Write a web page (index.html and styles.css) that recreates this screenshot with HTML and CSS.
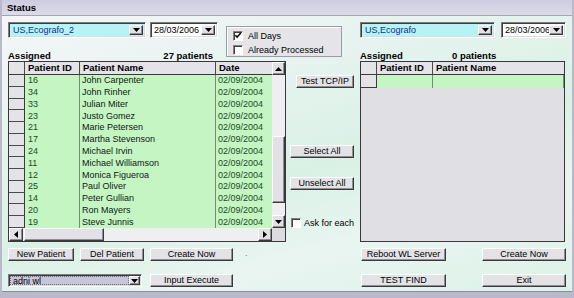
FILE: index.html
```html
<!DOCTYPE html>
<html>
<head>
<meta charset="utf-8">
<link rel="stylesheet" href="styles.css">
</head>
<body>
<div class="win">
  <div class="title">Status</div>
  <div class="body">
    <div class="top">
      <div class="tl">
        <div class="combos">
          <div class="combo cyan w138"><span class="val">US,Ecografo_2</span><span class="dd"><svg width="7" height="4" viewBox="0 0 7 4"><path d="M0 0h7L3.5 4z" fill="#000"/></svg></span></div>
          <div class="combo white w68"><span class="val">28/03/2006</span><span class="dd"><svg width="7" height="4" viewBox="0 0 7 4"><path d="M0 0h7L3.5 4z" fill="#000"/></svg></span></div>
        </div>
        <div class="lbl-row"><b>Assigned</b><b class="cnt-l">27 patients</b></div>
      </div>
      <div class="group">
        <div class="chk"><span class="box"><svg width="9" height="9" viewBox="0 0 9 9"><path d="M1.5 4.2L3.5 6.3L7.6 1.8" fill="none" stroke="#000" stroke-width="1.7"/></svg></span><span>All Days</span></div>
        <div class="chk"><span class="box"></span><span>Already Processed</span></div>
      </div>
      <div class="tr">
        <div class="combos gap6">
          <div class="combo cyan w135"><span class="val">US,Ecografo</span><span class="dd"><svg width="7" height="4" viewBox="0 0 7 4"><path d="M0 0h7L3.5 4z" fill="#000"/></svg></span></div>
          <div class="combo white w65"><span class="val">28/03/2006</span><span class="dd"><svg width="7" height="4" viewBox="0 0 7 4"><path d="M0 0h7L3.5 4z" fill="#000"/></svg></span></div>
        </div>
        <div class="lbl-row r"><b>Assigned</b><b>0 patients</b></div>
      </div>
    </div>

    <div class="main">
      <div class="dgrid left">
        <div class="hdr">
          <span class="sel"></span><span class="hc">Patient ID</span><span class="hc">Patient Name</span><span class="hc last">Date</span>
        </div>
        <div class="vscroll">
          <span class="sbtn"><svg width="7" height="4" viewBox="0 0 7 4"><path d="M0 4h7L3.5 0z" fill="#000"/></svg></span>
          <span class="track"><span class="vthumb"></span></span>
          <span class="sbtn"><svg width="7" height="4" viewBox="0 0 7 4"><path d="M0 0h7L3.5 4z" fill="#000"/></svg></span>
        </div>
        <div class="rows">
          <div class="row"><i></i><span class="id">16</span><span class="nm">John Carpenter</span><span class="dt">02/09/2004</span></div>
          <div class="row"><i></i><span class="id">34</span><span class="nm">John Rinher</span><span class="dt">02/09/2004</span></div>
          <div class="row"><i></i><span class="id">33</span><span class="nm">Julian Miter</span><span class="dt">02/09/2004</span></div>
          <div class="row"><i></i><span class="id">23</span><span class="nm">Justo Gomez</span><span class="dt">02/09/2004</span></div>
          <div class="row"><i></i><span class="id">21</span><span class="nm">Marie Petersen</span><span class="dt">02/09/2004</span></div>
          <div class="row"><i></i><span class="id">17</span><span class="nm">Martha Stevenson</span><span class="dt">02/09/2004</span></div>
          <div class="row"><i></i><span class="id">24</span><span class="nm">Michael Irvin</span><span class="dt">02/09/2004</span></div>
          <div class="row"><i></i><span class="id">11</span><span class="nm">Michael Williamson</span><span class="dt">02/09/2004</span></div>
          <div class="row"><i></i><span class="id">12</span><span class="nm">Monica Figueroa</span><span class="dt">02/09/2004</span></div>
          <div class="row"><i></i><span class="id">25</span><span class="nm">Paul Oliver</span><span class="dt">02/09/2004</span></div>
          <div class="row"><i></i><span class="id">14</span><span class="nm">Peter Gullian</span><span class="dt">02/09/2004</span></div>
          <div class="row"><i></i><span class="id">20</span><span class="nm">Ron Mayers</span><span class="dt">02/09/2004</span></div>
          <div class="row"><i></i><span class="id">19</span><span class="nm">Steve Junnis</span><span class="dt">02/09/2004</span></div>
        </div>
        <div class="hscroll">
          <span class="sbtn h"><svg width="4" height="7" viewBox="0 0 4 7"><path d="M4 0v7L0 3.5z" fill="#000"/></svg></span>
          <span class="htrack"><span class="hthumb"></span></span>
          <span class="sbtn h"><svg width="4" height="7" viewBox="0 0 4 7"><path d="M0 0v7L4 3.5z" fill="#000"/></svg></span>
        </div>
        <div class="corner"></div>
      </div>

      <div class="mid">
        <div class="btn tcp">Test TCP/IP</div>
        <div class="btn sel-all">Select All</div>
        <div class="btn unsel">Unselect All</div>
        <div class="chk ask"><span class="box"></span><span>Ask for each</span></div>
      </div>

      <div class="dgrid right">
        <div class="hdr r">
          <span class="sel"></span><span class="hc">Patient ID</span><span class="hc last">Patient Name</span>
        </div>
        <div class="row r"><i class="cur"></i><span class="id"></span><span class="nm"></span></div>
      </div>
    </div>

    <div class="bottom">
      <div class="btn c1">New Patient</div>
      <div class="btn c3">Del Patient</div>
      <div class="btn c5">Create Now</div>
      <div class="dot">.</div>
      <div class="btn c7">Reboot WL Server</div>
      <div class="btn c9">Create Now</div>

      <div class="combo lav c1to3"><span class="val"><span class="focus">adni wl</span></span><span class="dd"><svg width="7" height="4" viewBox="0 0 7 4"><path d="M0 0h7L3.5 4z" fill="#000"/></svg></span></div>
      <div class="btn c5">Input Execute</div>
      <div class="btn c7">TEST FIND</div>
      <div class="btn c9">Exit</div>
    </div>
  </div>
</div>
</body>
</html>
```

FILE: styles.css
```css
* { box-sizing: border-box; margin: 0; padding: 0; }
html, body { width: 574px; height: 298px; overflow: hidden; }
body { font-family: "Liberation Sans", Arial, sans-serif; font-size: 9px; color: #000; }

.win {
  width: 574px; height: 298px;
  border-style: solid; border-color: #b9b9c9;
  border-width: 0 2px 6px 2px;
  display: flex; flex-direction: column;
}
.title {
  height: 16px;
  background: linear-gradient(#cdcbe0, #dcdbe6);
  border-bottom: 1px solid #a4a4b6;
  font-weight: bold; font-size: 9.5px;
  padding-left: 5px; line-height: 15px;
}
.body {
  flex: 1;
  padding: 6px 6px 0 6px;
  border-bottom: 1px solid #8c8c9e;
  background: linear-gradient(165deg, #f4f6f8 0%, #e6f3ef 30%, #d9f1e5 55%, #e9f5f1 75%, #dcf2e8 100%);
}

/* top */
.top {
  display: grid;
  grid-template-columns: 210px 8px 116px 18px 206px;
  grid-template-rows: 16px 11px;
  row-gap: 12px;
}
.tl { grid-column: 1; grid-row: 1 / span 2; display: grid; grid-template-rows: 16px 11px; row-gap: 12px; }
.tr { grid-column: 5; grid-row: 1 / span 2; display: grid; grid-template-rows: 16px 11px; row-gap: 12px; }
.group {
  grid-column: 3; grid-row: 1 / span 2;
  margin-top: 4px; height: 31px;
  background: #e4e4e9;
  border: 1px solid #9c9ca4;
  box-shadow: inset 1px 1px 0 #fff;
  padding: 3px 0 0 6px;
  display: flex; flex-direction: column; gap: 3px;
}
.combos { display: flex; gap: 4px; }
.combos.gap6 { gap: 6px; }
.lbl-row { display: flex; line-height: 11px; font-size: 9.5px; }
.lbl-row .cnt-l { margin-left: auto; margin-right: 5px; }
.lbl-row.r { display: grid; grid-template-columns: 92px auto; }

.combo {
  height: 16px;
  display: flex; align-items: stretch;
  border: 1px solid; border-color: #7c7c80 #fff #fff #7c7c80;
  box-shadow: inset 1px 1px 0 #3c3c3c, inset -1px -1px 0 #dcdcdc;
  padding: 2px;
}
.combo .val { flex: 1; display: flex; align-items: center; padding-left: 2px; white-space: nowrap; overflow: hidden; }
.combo .dd {
  width: 14px;
  background: #e2e2e6;
  border: 1px solid; border-color: #fff #3a3a3a #3a3a3a #fff;
  box-shadow: inset -1px -1px 0 #8e8e94;
  display: flex; align-items: center; justify-content: center;
}
.cyan { background: #b7f3f5; }
.cyan .val { color: #14308c; }
.white { background: #fff; }
.white .val { padding-left: 1px; }
.w138 { width: 138px; }
.w68 { width: 68px; }
.w135 { width: 135px; }
.w65 { width: 65px; }

.chk { display: flex; align-items: center; gap: 5px; height: 11px; }
.box {
  width: 10px; height: 10px; flex: none;
  background: #fff;
  border: 1px solid; border-color: #808084 #fff #fff #808084;
  box-shadow: inset 1px 1px 0 #404040;
  display: flex; align-items: center; justify-content: center;
}

/* main */
.main {
  display: grid;
  grid-template-columns: 278px 74px 205px;
  height: 181px;
}
.dgrid {
  border: 1px solid #38383c;
  background: #dfdfe4;
  display: grid;
}
.dgrid.left {
  grid-template-columns: 16px 55px 136px 56px 13px;
  grid-template-rows: 13px 153px 13px;
}
.hdr { grid-column: 1 / span 4; display: grid; grid-template-columns: 16px 55px 136px 56px; border-bottom: 1px solid #3a3a3a; background: #e3e3e8; }
.hdr.r { grid-column: 1; grid-template-columns: 16px 56px 1fr; height: 13px; }
.hdr .sel { border-right: 1px solid #4a4a4a; }
.hc { font-weight: bold; font-size: 9.5px; line-height: 12px; padding-left: 3px; border-right: 1px solid #4a4a4a; white-space: nowrap; overflow: hidden; }
.hc.last { border-right: none; }

.vscroll { grid-column: 5; grid-row: 1 / span 2; display: flex; flex-direction: column; background: #efeff2; }
.sbtn {
  width: 13px; height: 13px; flex: none;
  background: #e2e2e6;
  border: 1px solid; border-color: #fff #3a3a3a #3a3a3a #fff;
  box-shadow: inset -1px -1px 0 #8e8e94;
  display: flex; align-items: center; justify-content: center;
}
.sbtn.h { width: 14px; }
.track { flex: 1; display: flex; flex-direction: column; justify-content: flex-end; padding-bottom: 12px; }
.vthumb {
  height: 67px;
  background: #e2e2e6;
  border: 1px solid; border-color: #fff #3a3a3a #3a3a3a #fff;
  box-shadow: inset -1px -1px 0 #8e8e94;
}

.rows { grid-column: 1 / span 4; grid-row: 2; display: grid; grid-template-rows: repeat(13, 1fr); background: #c4f5c3; }
.row { display: grid; grid-template-columns: 16px 55px 136px 56px; line-height: 11px; white-space: nowrap; }
.row i { background: #e3e3e8; border-right: 1px solid #3a3a3a; border-bottom: 1px solid #4a4a4a; }
.row .id { color: #1b4d1f; padding-left: 3px; border-right: 1px solid #6f8f6f; display: flex; align-items: center; }
.row .nm { color: #101810; padding-left: 2px; border-right: 1px solid #6f8f6f; display: flex; align-items: center; overflow: hidden; }
.row .dt { color: #1b4d1f; padding-left: 2px; display: flex; align-items: center; }
.row.r { grid-template-columns: 16px 56px 1fr; height: 13px; background: #c4f5c3; }
.row.r i.cur { border: 1px solid #3a3a3a; border-top: none; border-left: none; }

.dgrid.right { grid-template-rows: 13px 13px 1fr; align-content: start; }

.hscroll { grid-column: 1 / span 4; grid-row: 3; display: flex; background: #efeff2; }
.htrack { flex: 1; display: flex; padding-left: 1px; }
.hthumb {
  width: 80px;
  background: #e2e2e6;
  border: 1px solid; border-color: #fff #3a3a3a #3a3a3a #fff;
  box-shadow: inset -1px -1px 0 #8e8e94;
}
.corner { grid-column: 5; grid-row: 3; background: #dcdce0; }

.mid { display: flex; flex-direction: column; align-items: flex-start; }
.btn {
  height: 13px;
  background: #e3e3e6;
  border: 1px solid; border-color: #fff #3a3a3a #3a3a3a #fff;
  box-shadow: inset -1px -1px 0 #8e8e94;
  display: flex; align-items: center; justify-content: center;
  white-space: nowrap; line-height: 11px;
}
.tcp { width: 58px; margin: 14px 0 0 10px; }
.sel-all { width: 64px; margin: 57px 0 0 4px; }
.unsel { width: 64px; margin: 19px 0 0 4px; }
.ask { margin: 27px 0 0 5px; gap: 3px; }

/* bottom */
.bottom {
  margin-top: 6px;
  display: grid;
  grid-template-columns: 66px 6px 64px 6px 83px 128px 85px 36px 84px;
  grid-template-rows: 13px 13px;
  row-gap: 13px;
}
.c1 { grid-column: 1; }
.c3 { grid-column: 3; }
.c5 { grid-column: 5; }
.c7 { grid-column: 7; }
.c9 { grid-column: 9; }
.c1to3 { grid-column: 1 / span 3; width: 134px; }
.dot { grid-column: 6; padding-left: 12px; color: #777; line-height: 11px; }
.combo.lav { height: 13px; padding: 1px; background: #fff; }
.lav .val { padding: 0; }
.lav .focus {
  display: flex; align-items: center; height: 100%; width: 100%;
  background: #c6c6da; outline: 1px dotted #6a6a7a; outline-offset: -1px;
  padding-left: 3px;
}
.lav .dd { width: 11px; }
```
